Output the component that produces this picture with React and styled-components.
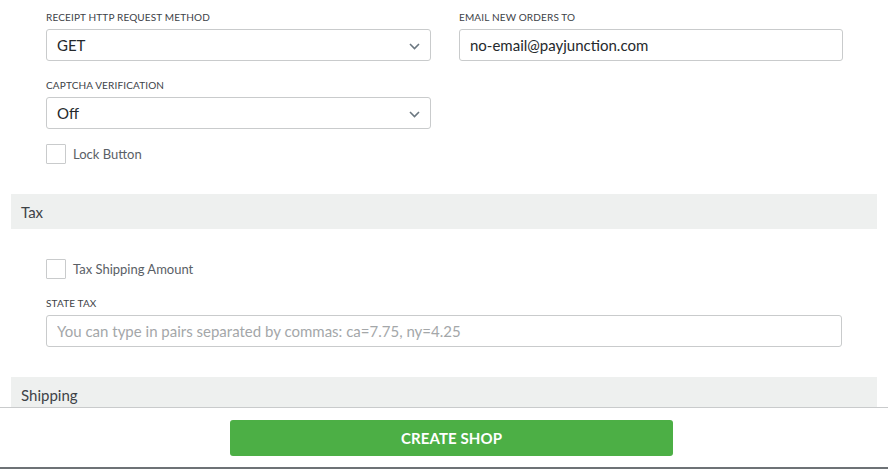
import styled, { createGlobalStyle } from 'styled-components';

const GlobalStyle = createGlobalStyle`
  html, body {
    margin: 0;
    padding: 0;
    background: #fff;
  }
  body {
    font-family: 'Lato', 'Open Sans', sans-serif;
    color: #3a3f44;
  }
  * {
    box-sizing: border-box;
  }
`;

const Page = styled.div`
  display: flex;
  flex-direction: column;
  height: 469px;
  overflow: hidden;
`;

const Scroller = styled.div`
  flex: 1;
  overflow: hidden;
  padding: 0 11px;
`;

const SectionBody = styled.div`
  padding: ${({ $top }) => $top || 10}px 35px ${({ $bottom }) => $bottom || 30}px;
  display: flex;
  flex-direction: column;
`;

const Row = styled.div`
  display: grid;
  grid-template-columns: 385px 384px;
  column-gap: 28px;
`;

const Field = styled.div`
  display: flex;
  flex-direction: column;
  margin-bottom: ${({ $mb }) => $mb ?? 17}px;
`;

const Label = styled.label`
  font-size: 10px;
  letter-spacing: 0.15px;
  text-transform: uppercase;
  color: #3d4247;
  line-height: 14px;
  margin-bottom: 5px;
`;

const SelectBox = styled.div`
  position: relative;
  height: 32px;
  border: 1px solid #c9cbcc;
  border-radius: 3px;
  display: flex;
  align-items: center;
  padding: 0 10px;
  font-size: 15px;
  color: #25292c;
  background: #fff;

  svg {
    position: absolute;
    right: 10px;
    top: 13px;
  }
`;

const TextInput = styled.input`
  height: 32px;
  border: 1px solid #c9cbcc;
  border-radius: 3px;
  padding: 0 10px;
  font-family: inherit;
  font-size: 15px;
  color: #25292c;
  background: #fff;
  outline: none;
  width: 100%;

  &::placeholder {
    color: #a4a7a9;
  }
`;

const CheckRow = styled.label`
  display: flex;
  align-items: center;
  gap: 7px;
  font-size: 13px;
  color: #5a6066;
  margin-bottom: ${({ $mb }) => $mb ?? 0}px;
`;

const Box = styled.span`
  width: 20px;
  height: 20px;
  border: 1px solid #c9cbcc;
  border-radius: 1px;
  background: #fff;
`;

const SectionHeader = styled.div`
  height: 35px;
  background: #eef0ef;
  display: flex;
  align-items: center;
  padding: 0 10px;
  font-size: 15px;
  color: #3d4247;
`;

const Footer = styled.div`
  height: 62px;
  border-top: 1px solid #c9cbcc;
  border-bottom: 2px solid #6d7276;
  background: #fff;
  display: flex;
  justify-content: flex-start;
  align-items: flex-start;
  padding: 12px 0 0 230px;
`;

const CreateButton = styled.button`
  width: 443px;
  height: 36px;
  border: none;
  border-radius: 3px;
  background: #4caf45;
  color: #fff;
  font-family: inherit;
  font-size: 15px;
  font-weight: 700;
  text-transform: uppercase;
  letter-spacing: 0.1px;
`;

const Chevron = () => (
  <svg width="11" height="7" viewBox="0 0 11 7">
    <path d="M1 1l4.5 4.5L10 1" fill="none" stroke="#6b7780" strokeWidth="1.6" />
  </svg>
);

export default function App() {
  return (
    <>
      <GlobalStyle />
      <Page>
        <Scroller>
          <SectionBody $top={10} $bottom={30}>
            <Row>
              <Field>
                <Label>Receipt HTTP Request Method</Label>
                <SelectBox>
                  GET
                  <Chevron />
                </SelectBox>
              </Field>
              <Field>
                <Label>Email New Orders To</Label>
                <TextInput defaultValue="no-email@payjunction.com" />
              </Field>
            </Row>
            <Row>
              <Field $mb={15}>
                <Label>Captcha Verification</Label>
                <SelectBox>
                  Off
                  <Chevron />
                </SelectBox>
              </Field>
            </Row>
            <CheckRow>
              <Box />
              Lock Button
            </CheckRow>
          </SectionBody>
          <SectionHeader>Tax</SectionHeader>
          <SectionBody $top={30} $bottom={30}>
            <CheckRow $mb={17}>
              <Box />
              Tax Shipping Amount
            </CheckRow>
            <Field $mb={0}>
              <Label>State Tax</Label>
              <TextInput placeholder="You can type in pairs separated by commas: ca=7.75, ny=4.25" />
            </Field>
          </SectionBody>
          <SectionHeader>Shipping</SectionHeader>
        </Scroller>
        <Footer>
          <CreateButton>Create Shop</CreateButton>
        </Footer>
      </Page>
    </>
  );
}
